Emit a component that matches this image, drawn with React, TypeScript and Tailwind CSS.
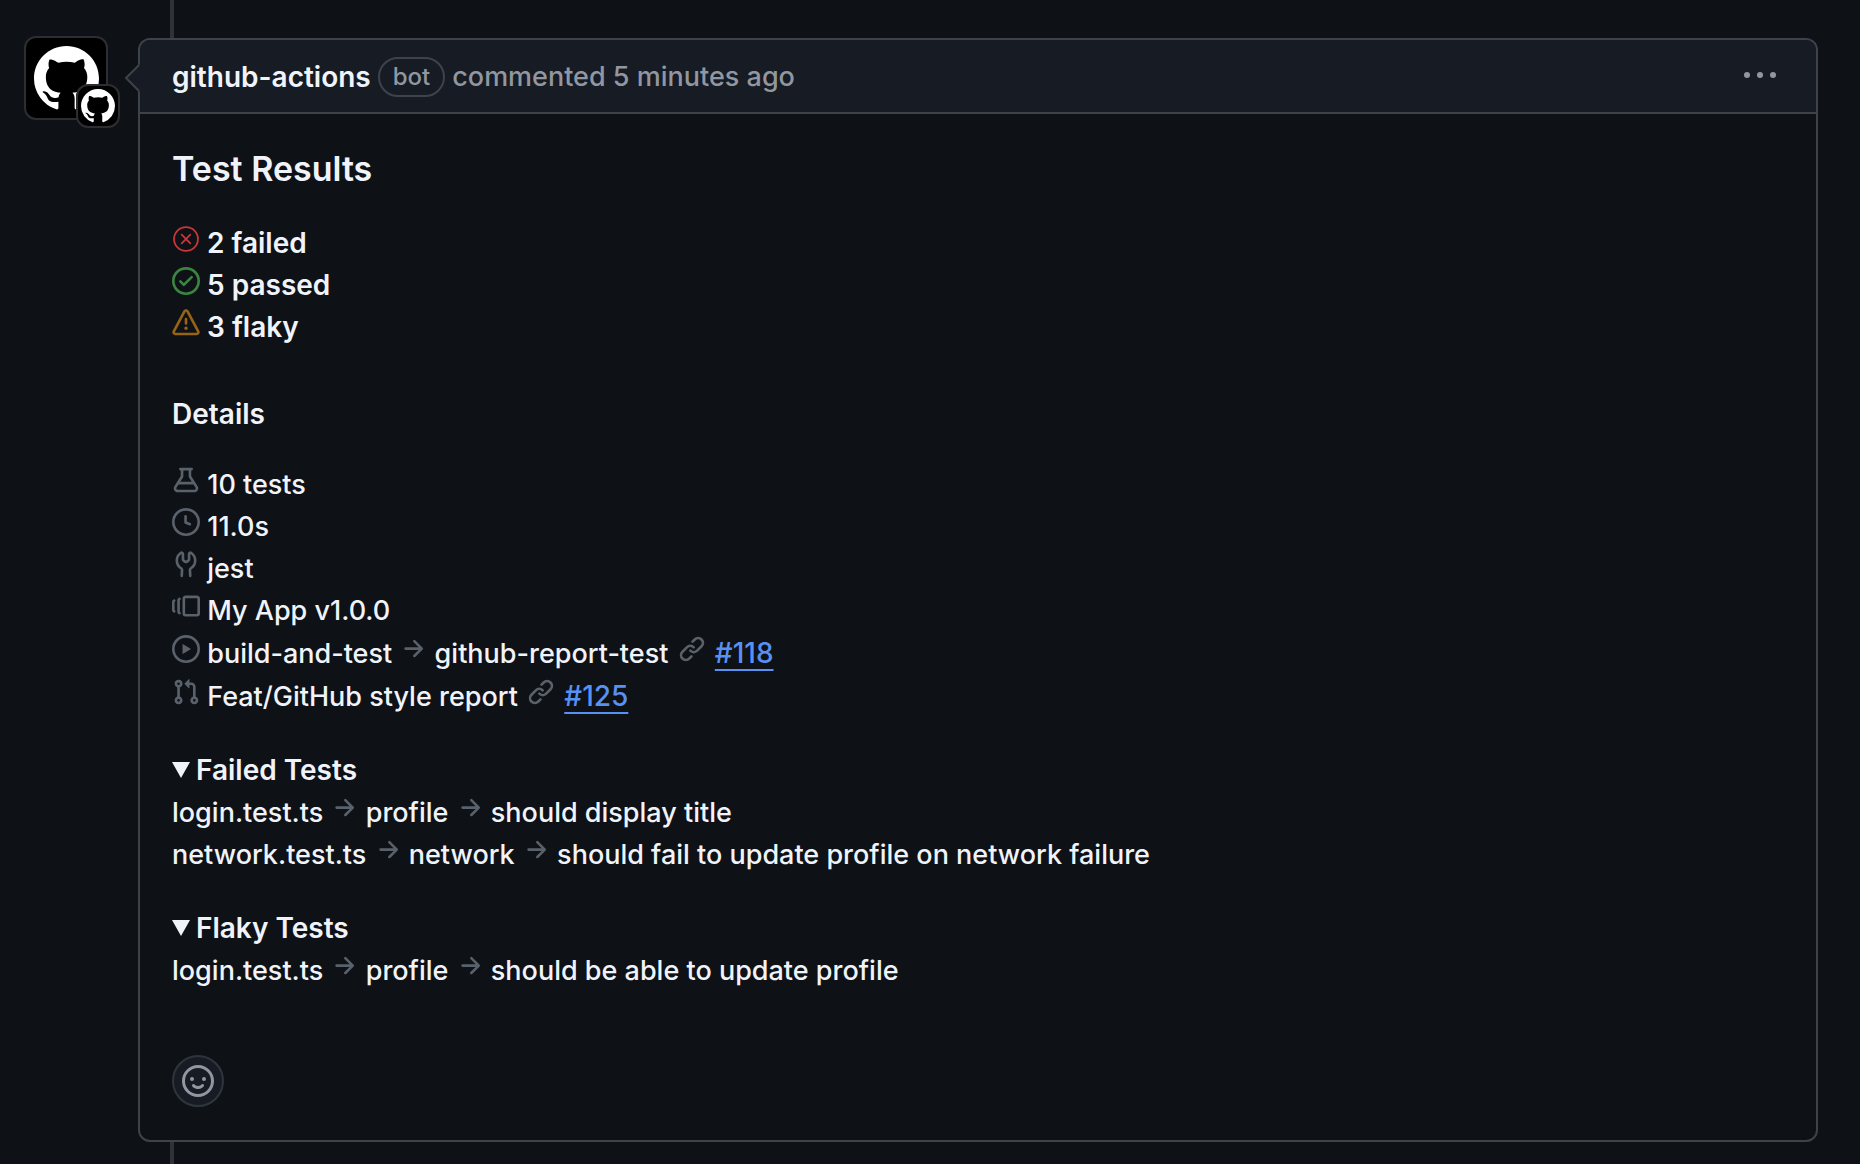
import type { ReactNode } from 'react';

const PATHS = {
  mark: 'M8 0c4.42 0 8 3.58 8 8a8.013 8.013 0 0 1-5.45 7.59c-.4.08-.55-.17-.55-.38 0-.27.01-1.13.01-2.2 0-.75-.25-1.23-.54-1.48 1.78-.2 3.65-.88 3.65-3.95 0-.88-.31-1.59-.82-2.15.08-.2.36-1.02-.08-2.12 0 0-.67-.22-2.2.82-.64-.18-1.32-.27-2-.27-.68 0-1.36.09-2 .27-1.53-1.03-2.2-.82-2.2-.82-.44 1.1-.16 1.92-.08 2.12-.51.56-.82 1.28-.82 2.15 0 3.06 1.86 3.75 3.64 3.95-.23.2-.44.55-.51 1.07-.46.21-1.61.55-2.33-.66-.15-.24-.6-.83-1.23-.82-.67.01-.27.38.01.53.34.19.73.9.82 1.13.16.45.68 1.31 2.69.94 0 .67.01 1.3.01 1.49 0 .21-.15.45-.55.38A7.995 7.995 0 0 1 0 8c0-4.42 3.58-8 8-8Z',
  check: 'M0 8a8 8 0 1 1 16 0A8 8 0 0 1 0 8Zm1.5 0a6.5 6.5 0 1 0 13 0 6.5 6.5 0 0 0-13 0Zm10.28-1.72-4.5 4.5a.75.75 0 0 1-1.06 0l-2-2a.751.751 0 0 1 .018-1.042.751.751 0 0 1 1.042-.018l1.47 1.47 3.97-3.97a.751.751 0 0 1 1.042.018.751.751 0 0 1 .018 1.042Z',
  alert: 'M6.457 1.047c.659-1.234 2.427-1.234 3.086 0l6.082 11.378A1.75 1.75 0 0 1 14.082 15H1.918a1.75 1.75 0 0 1-1.543-2.575Zm1.763.707a.25.25 0 0 0-.44 0L1.698 13.132a.25.25 0 0 0 .22.368h12.164a.25.25 0 0 0 .22-.368Zm.53 3.996v2.5a.75.75 0 0 1-1.5 0v-2.5a.75.75 0 0 1 1.5 0ZM9 11a1 1 0 1 1-2 0 1 1 0 0 1 2 0Z',
  beaker: 'M5 5.782V2.5h-.25a.75.75 0 0 1 0-1.5h6.5a.75.75 0 0 1 0 1.5H11v3.282l3.666 5.76C15.619 13.04 14.543 15 12.767 15H3.233c-1.776 0-2.852-1.96-1.899-3.458Zm-2.4 6.565a.75.75 0 0 0 .633 1.153h9.534a.75.75 0 0 0 .633-1.153L12.225 10.5h-8.45ZM9.5 2.5h-3V6c0 .143-.04.283-.117.403L4.73 9h6.54L9.617 6.403A.746.746 0 0 1 9.5 6Z',
  clock: 'M8 0a8 8 0 1 1 0 16A8 8 0 0 1 8 0ZM1.5 8a6.5 6.5 0 1 0 13 0 6.5 6.5 0 0 0-13 0Zm7-3.25v2.992l2.028.812a.75.75 0 0 1-.557 1.392l-2.5-1A.751.751 0 0 1 7 8.25v-3.5a.75.75 0 0 1 1.5 0Z',
  tool: 'M5.433 2.304A4.494 4.494 0 0 0 3.5 6c0 1.598.832 3.002 2.09 3.802.518.328.929.923.902 1.64v.008l-.164 3.337a.75.75 0 1 1-1.498-.073l.163-3.33c.002-.085-.05-.216-.207-.316A5.996 5.996 0 0 1 2 6a5.993 5.993 0 0 1 2.567-4.92 1.482 1.482 0 0 1 1.673-.04c.462.296.76.827.76 1.423v2.82c0 .082.041.16.11.206l.75.51a.25.25 0 0 0 .28 0l.75-.51A.249.249 0 0 0 9 5.282V2.463c0-.596.298-1.127.76-1.423a1.482 1.482 0 0 1 1.673.04A5.993 5.993 0 0 1 14 6a5.996 5.996 0 0 1-2.786 5.068c-.157.1-.209.23-.207.315l.163 3.33a.752.752 0 0 1-1.094.714.75.75 0 0 1-.404-.64l-.164-3.345c-.027-.717.384-1.312.902-1.64A4.495 4.495 0 0 0 12.5 6a4.494 4.494 0 0 0-1.933-3.696c-.024.017-.067.067-.067.159v2.82a1.75 1.75 0 0 1-.767 1.448l-.75.51a1.75 1.75 0 0 1-1.966 0l-.75-.51A1.75 1.75 0 0 1 5.5 5.282V2.463c0-.092-.043-.142-.067-.159Z',
  versions: 'M7.75 14A1.75 1.75 0 0 1 6 12.25v-8.5C6 2.784 6.784 2 7.75 2h6.5c.966 0 1.75.784 1.75 1.75v8.5A1.75 1.75 0 0 1 14.25 14Zm-.25-1.75c0 .138.112.25.25.25h6.5a.25.25 0 0 0 .25-.25v-8.5a.25.25 0 0 0-.25-.25h-6.5a.25.25 0 0 0-.25.25ZM4.9 3.508a.75.75 0 0 1-.274 1.025.249.249 0 0 0-.126.217v6.5c0 .09.048.173.126.217a.75.75 0 0 1-.752 1.298A1.75 1.75 0 0 1 3 11.25v-6.5c0-.649.353-1.214.874-1.516a.75.75 0 0 1 1.025.274ZM1.625 5.533h.001a.249.249 0 0 0-.126.217v4.5c0 .09.048.173.126.217a.75.75 0 0 1-.752 1.298A1.748 1.748 0 0 1 0 10.25v-4.5a1.748 1.748 0 0 1 .873-1.516.75.75 0 1 1 .752 1.299Z',
  play: 'M8 0a8 8 0 1 1 0 16A8 8 0 0 1 8 0ZM1.5 8a6.5 6.5 0 1 0 13 0 6.5 6.5 0 0 0-13 0Zm4.879-2.773 4.264 2.559a.25.25 0 0 1 0 .428l-4.264 2.559A.25.25 0 0 1 6 10.559V5.442a.25.25 0 0 1 .379-.215Z',
  pullRequest: 'M1.5 3.25a2.25 2.25 0 1 1 3 2.122v5.256a2.251 2.251 0 1 1-1.5 0V5.372A2.25 2.25 0 0 1 1.5 3.25Zm5.677-.177L9.573.677A.25.25 0 0 1 10 .854V2.5h1A2.5 2.5 0 0 1 13.5 5v5.628a2.251 2.251 0 1 1-1.5 0V5a1 1 0 0 0-1-1h-1v1.646a.25.25 0 0 1-.427.177L7.177 3.427a.25.25 0 0 1 0-.354ZM3.75 2.5a.75.75 0 1 0 0 1.5.75.75 0 0 0 0-1.5Zm0 9.5a.75.75 0 1 0 0 1.5.75.75 0 0 0 0-1.5Zm8.25.75a.75.75 0 1 0 1.5 0 .75.75 0 0 0-1.5 0Z',
  arrow: 'M8.22 2.97a.75.75 0 0 1 1.06 0l4.25 4.25a.75.75 0 0 1 0 1.06l-4.25 4.25a.751.751 0 0 1-1.042-.018.751.751 0 0 1-.018-1.042l2.97-2.97H3.75a.75.75 0 0 1 0-1.5h7.44L8.22 4.03a.75.75 0 0 1 0-1.06Z',
  link: 'm7.775 3.275 1.25-1.25a3.5 3.5 0 1 1 4.95 4.95l-2.5 2.5a3.5 3.5 0 0 1-4.95 0 .751.751 0 0 1 .018-1.042.751.751 0 0 1 1.042-.018 1.998 1.998 0 0 0 2.83 0l2.5-2.5a2.002 2.002 0 0 0-2.83-2.83l-1.25 1.25a.751.751 0 0 1-1.042-.018.751.751 0 0 1-.018-1.042Zm-4.69 9.64a1.998 1.998 0 0 0 2.83 0l1.25-1.25a.751.751 0 0 1 1.042.018.751.751 0 0 1 .018 1.042l-1.25 1.25a3.5 3.5 0 1 1-4.95-4.95l2.5-2.5a3.5 3.5 0 0 1 4.95 0 .751.751 0 0 1-.018 1.042.751.751 0 0 1-1.042.018 1.998 1.998 0 0 0-2.83 0l-2.5 2.5a1.998 1.998 0 0 0 0 2.83Z',
  smiley: 'M8 0a8 8 0 1 1 0 16A8 8 0 0 1 8 0ZM1.5 8a6.5 6.5 0 1 0 13 0 6.5 6.5 0 0 0-13 0Zm3.82 1.636a.75.75 0 0 1 1.038.175l.007.009c.103.118.22.222.35.31.264.178.683.37 1.285.37.602 0 1.02-.192 1.285-.371.13-.088.247-.192.35-.31l.007-.008a.75.75 0 0 1 1.222.87l-.022-.015c.02.013.021.015.021.015v.001l-.001.002-.002.003-.005.007-.014.019a2.066 2.066 0 0 1-.184.213c-.16.166-.338.316-.53.445-.63.418-1.37.638-2.127.629-.946 0-1.652-.308-2.126-.63a3.331 3.331 0 0 1-.715-.657l-.014-.02-.005-.006-.002-.003v-.002h-.001l.613-.432-.614.43a.75.75 0 0 1 .183-1.044ZM12 7a1 1 0 1 1-2 0 1 1 0 0 1 2 0ZM5 8a1 1 0 1 1 0-2 1 1 0 0 1 0 2Z',
};

type IconName = keyof typeof PATHS;

function Icon({ name, className = 'size-7 text-[#59616b]' }: { name: IconName; className?: string }) {
  return (
    <svg viewBox="0 0 16 16" fill="currentColor" aria-hidden="true" className={`inline-block shrink-0 align-baseline ${className}`}>
      <path d={PATHS[name]} />
    </svg>
  );
}

function FailIcon() {
  return (
    <svg viewBox="0 0 24 24" fill="none" stroke="currentColor" strokeWidth="1.5" strokeLinecap="round" aria-hidden="true" className="inline-block size-7 align-baseline text-[#c9373a]">
      <circle cx="12" cy="12" r="10.25" />
      <path d="m8.3 8.3 7.4 7.4m0-7.4-7.4 7.4" />
    </svg>
  );
}

function Crumbs({ parts }: { parts: string[] }) {
  return (
    <>
      {parts.map((part, i) => (
        <span key={part}>
          {i > 0 && <> <Icon name="arrow" /> </>}
          {part}
        </span>
      ))}
    </>
  );
}

function TestGroup({ title, tests }: { title: string; tests: string[][] }) {
  return (
    <details open className="mt-[31px]">
      <summary className="flex cursor-pointer list-none items-center gap-1.5 text-[28px] font-semibold">
        <svg viewBox="0 0 18 16" fill="currentColor" aria-hidden="true" className="h-4 w-[18px]">
          <path d="M0 0h18L9 16Z" />
        </svg>
        {title}
      </summary>
      <ul className="pt-px">
        {tests.map((parts) => (
          <li key={parts.join()}>
            <Crumbs parts={parts} />
          </li>
        ))}
      </ul>
    </details>
  );
}

function Linked({ children, href, label }: { children: ReactNode; href: string; label: string }) {
  return (
    <li>
      {children} <Icon name="link" className="ml-0.5 size-7 text-[#59616b]" />{' '}
      <a href={href} className="ml-0.5 text-[28px] text-[#5891f4] underline decoration-2 underline-offset-[6px] [text-decoration-skip-ink:none]">
        {label}
      </a>
    </li>
  );
}

export default function App() {
  return (
    <main className="flex min-h-screen flex-col bg-[#0e1116] font-['Inter',sans-serif] text-[27px] leading-[42px] font-[450] text-[#f0f4fa]">
      <div className="ml-[170px] h-[38px] w-1 bg-[#2f3237]" />
      <div className="flex items-start gap-[30px] pr-[42px] pl-6">
        <a href="#github-actions" aria-label="github-actions" className="relative -mt-0.5 flex size-[84px] shrink-0 items-center justify-center rounded-xl border-2 border-[#2c2e31] bg-black text-white">
          <Icon name="mark" className="size-[65px]" />
          <span className="absolute -right-3.5 -bottom-2.5 flex size-11 items-center justify-center rounded-xl border-2 border-[#2c2e31] bg-black">
            <Icon name="mark" className="size-[34px]" />
          </span>
        </a>
        <article className="relative min-w-0 flex-1 rounded-xl border-2 border-[#3d434b]">
          <svg viewBox="0 0 16 30" aria-hidden="true" className="absolute top-6 -left-4 h-[30px] w-4">
            <path d="M16 0 2 14 16 28Z" fill="#171b23" />
            <path d="M15 1 2 14l13 13" fill="none" stroke="#3d434b" strokeWidth="2" />
          </svg>
          <header className="flex h-[74px] items-center rounded-t-[10px] border-b-2 border-[#3d434b] bg-[#171b23] pr-10 pl-8">
            <h2 className="flex flex-1 items-center gap-[7px] pt-px text-[#9197a0]">
              <a href="#github-actions" className="text-[28px] font-semibold text-[#f0f4fa]">github-actions</a>
              <span className="rounded-full border-2 border-[#3d434b] px-[13px] text-2xl leading-9 font-medium">bot</span>
              <span>commented 5 minutes ago</span>
            </h2>
            <button type="button" aria-label="Show options" className="flex h-8 w-8 items-center text-[#9197a0]">
              <svg viewBox="0 0 16 16" fill="currentColor" aria-hidden="true" className="size-8">
                <circle cx="1.5" cy="7.5" r="1.5" />
                <circle cx="8" cy="7.5" r="1.5" />
                <circle cx="14.5" cy="7.5" r="1.5" />
              </svg>
            </button>
          </header>
          <div className="px-8 pt-8 pb-[33px]">
            <h3 className="text-[34px] leading-[46px] font-semibold">Test Results</h3>
            <ul className="mt-[30px] text-[28px] font-semibold">
              <li><FailIcon /> 2 failed</li>
              <li><Icon name="check" className="size-7 text-[#3a8540]" /> 5 passed</li>
              <li><Icon name="alert" className="size-7 text-[#966414]" /> 3 flaky</li>
            </ul>
            <h4 className="mt-[50px] text-[28px] leading-[33px] font-semibold">Details</h4>
            <ul className="mt-[33px]">
              <li><Icon name="beaker" /> 10 tests</li>
              <li><Icon name="clock" /> 11.0s</li>
              <li><Icon name="tool" /> jest</li>
              <li><Icon name="versions" /> My App v1.0.0</li>
              <Linked href="#118" label="#118">
                <Icon name="play" /> <Crumbs parts={['build-and-test', 'github-report-test']} />
              </Linked>
              <Linked href="#125" label="#125">
                <Icon name="pullRequest" /> Feat/GitHub style report
              </Linked>
            </ul>
            <TestGroup
              title="Failed Tests"
              tests={[
                ['login.test.ts', 'profile', 'should display title'],
                ['network.test.ts', 'network', 'should fail to update profile on network failure'],
              ]}
            />
            <TestGroup title="Flaky Tests" tests={[['login.test.ts', 'profile', 'should be able to update profile']]} />
            <button type="button" aria-label="Add reaction" className="mt-[63px] flex size-[52px] items-center justify-center rounded-full border-2 border-[#2f353d] bg-[#171b23] text-[#9197a0]">
              <Icon name="smiley" className="size-8" />
            </button>
          </div>
        </article>
      </div>
      <div className="ml-[170px] w-1 flex-1 bg-[#2f3237]" />
    </main>
  );
}
